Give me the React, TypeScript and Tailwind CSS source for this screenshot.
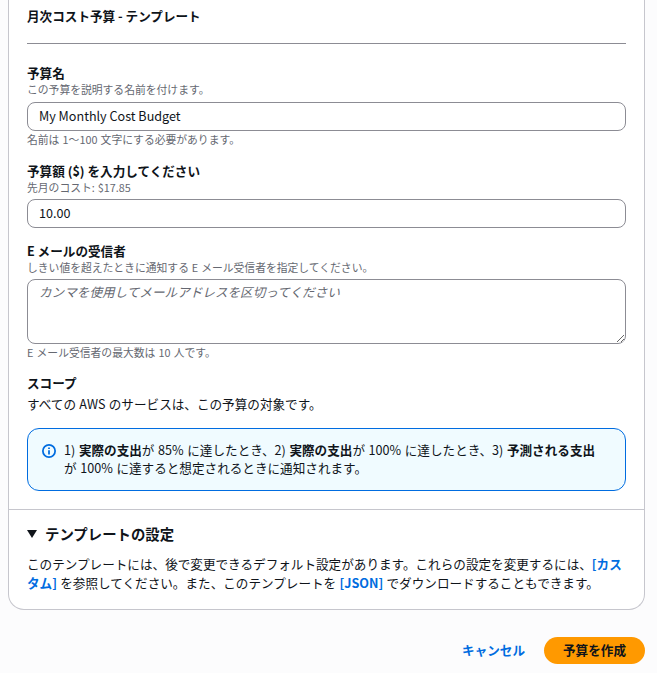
const font = { fontFamily: '"Noto Sans CJK JP", "Noto Sans", sans-serif' }

function Field({ label, desc, hint, className, children }: { label: string; desc: string; hint?: string; className?: string; children: React.ReactNode }) {
  return (
    <div className={className}>
      <div className="text-[12.6px] leading-[18px] font-bold text-[#0f141a]">{label}</div>
      <div className="text-[10.8px] leading-[14px] text-[#656871] mb-[6px] -mt-px pt-px [word-spacing:0.5px]">{desc}</div>
      {children}
      {hint && <div className="text-[10.8px] leading-[14px] text-[#656871] mt-[1px] pb-px [word-spacing:0.8px]">{hint}</div>}
    </div>
  )
}

export default function App() {
  return (
    <div className="h-[673px] overflow-hidden bg-[#fcfcfd]" style={font}>
      {/* Card */}
      <div className="mx-2 w-[637px] bg-white border-x border-b border-[#c6c6cd] rounded-b-2xl">
        <div className="px-[18px]">
          <div className="pt-[6px] pb-[17px] border-b border-[#8c8c94] text-[12.6px] leading-5 font-bold text-[#0f141a]">
            月次コスト予算 - テンプレート
          </div>

          <div className="pt-[20px]">
            <Field label="予算名" desc="この予算を説明する名前を付けます。" hint="名前は 1〜100 文字にする必要があります。">
              <input
                readOnly
                value="My Monthly Cost Budget"
                className="block w-full h-[29px] px-[11px] pb-[2px] text-[12.6px] text-[#0f141a] bg-white border border-[#8c8c94] rounded-lg outline-none"
                style={font}
              />
            </Field>

            <Field label="予算額 ($) を入力してください" desc="先月のコスト: $17.85" className="mt-[15px] [&>div:nth-child(2)]:mb-[5px]">
              <input
                readOnly
                value="10.00"
                className="block w-full h-[29px] px-[11px] pb-[3px] text-[12.6px] text-[#0f141a] bg-white border border-[#8c8c94] rounded-lg outline-none"
                style={font}
              />
            </Field>

            <Field
              label="E メールの受信者"
              desc="しきい値を超えたときに通知する E メール受信者を指定してください。"
              hint="E メール受信者の最大数は 10 人です。"
              className="mt-[14px] [&>div:nth-child(2)]:mb-[5px]"
            >
              <textarea
                readOnly
                placeholder="カンマを使用してメールアドレスを区切ってください"
                className="block w-full h-[65px] px-[11px] py-[2px] text-[12.6px] leading-5 italic bg-white border border-[#8c8c94] rounded-lg outline-none placeholder:text-[#656871]"
                style={font}
              />
            </Field>
          </div>

          <div className="mt-[14px]">
            <div className="text-[12.6px] leading-[18px] font-bold text-[#0f141a]">スコープ</div>
            <div className="mt-[2px] text-[12.6px] leading-5 text-[#0f141a] [word-spacing:0.5px]">すべての AWS のサービスは、この予算の対象です。</div>
          </div>

          <div className="mt-[14px] h-[63px] flex gap-[8px] pl-[14px] pr-[20px] pt-[12px] bg-[#f0fbff] border border-[#006ce0] rounded-xl">
            <svg viewBox="0 0 16 16" className="w-[14px] h-[14px] mt-[3px] shrink-0 fill-none stroke-[#006ce0] stroke-2">
              <circle cx="8" cy="8" r="7" />
              <path d="M8 7v5M8 4v1.8" />
            </svg>
            <p className="text-[12.6px] leading-[18px] text-[#0f141a] [word-spacing:0.8px]">
              1) <b>実際の支出</b>が 85% に達したとき、2) <b>実際の支出</b>が 100% に達したとき、3) <b>予測される支出</b>が 100% に達すると想定されるときに通知されます。
            </p>
          </div>
        </div>

        <div className="mt-[18px] border-t border-[#c6c6cd] px-[18px] pt-[13px] pb-[17px]">
          <div className="flex items-center gap-[8px] h-[22px] text-[14.4px] font-bold text-[#0f141a]">
            <svg viewBox="0 0 10 8" className="w-[10px] h-[8px] fill-[#0f141a]">
              <path d="M0 0h10L5 8z" />
            </svg>
            テンプレートの設定
          </div>
          <p className="mt-[9px] text-[12.6px] leading-[19px] text-[#0f141a] [word-spacing:0.5px]">
            このテンプレートには、後で変更できるデフォルト設定があります。これらの設定を変更するには、<b className="text-[#006ce0]">[カスタム]</b> を参照してください。また、このテンプレートを <b className="text-[#006ce0]">[JSON]</b> でダウンロードすることもできます。
          </p>
        </div>
      </div>

      {/* Footer actions */}
      <div className="mt-[27px] mr-3 flex items-center justify-end gap-[19px]">
        <button className="text-[12.6px] font-bold text-[#006ce0]">キャンセル</button>
        <button className="w-[101px] h-[27px] rounded-full bg-[#ff9900] text-[12.6px] font-bold text-[#0f141a]">予算を作成</button>
      </div>
    </div>
  )
}
